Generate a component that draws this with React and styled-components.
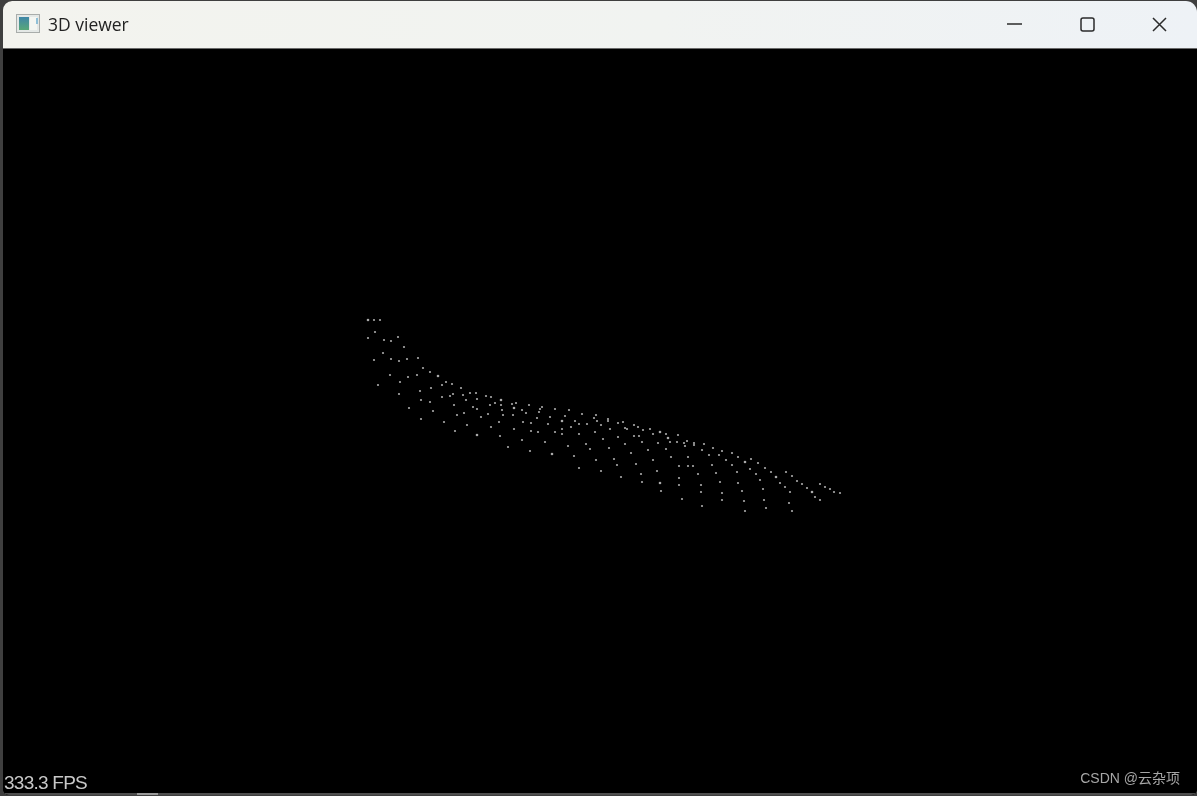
import React from "react";
import styled, { createGlobalStyle } from "styled-components";

const GlobalStyle = createGlobalStyle`
  html, body {
    margin: 0;
    padding: 0;
    height: 100%;
    background: #3f3f3f;
  }
  #root {
    height: 100%;
  }
`;

// point cloud, read off the reference in page coordinates
const cloud = [
  [368, 320], [374, 320], [380, 320], [375, 332], [368, 338], [384, 340], [391, 341], [398, 337],
  [404, 347], [383, 353], [374, 360], [391, 359], [399, 361], [407, 359], [418, 358], [423, 368],
  [430, 372], [438, 376], [417, 375], [408, 377], [390, 375], [400, 382], [378, 385], [399, 394],
  [420, 391], [431, 388], [442, 385], [446, 382], [452, 384], [461, 388], [470, 393], [476, 393],
  [486, 396], [491, 397], [501, 400], [512, 404], [516, 403], [463, 395], [453, 394], [450, 396],
  [442, 397], [421, 400], [430, 402], [466, 400], [477, 399], [495, 403], [501, 405], [490, 405],
  [454, 405], [473, 407], [477, 409], [514, 408], [502, 410], [409, 408], [433, 411], [457, 415],
  [464, 413], [488, 414], [503, 415], [513, 415], [481, 417], [421, 419], [444, 422], [467, 425],
  [499, 422], [491, 427], [514, 429], [455, 431], [477, 435], [500, 436], [508, 447],
  [529, 405], [542, 407], [540, 409], [539, 412], [522, 410], [526, 413], [555, 409], [569, 410],
  [582, 414], [596, 415], [594, 418], [565, 416], [550, 417], [537, 418], [562, 421], [575, 421],
  [597, 421], [608, 419], [608, 421], [523, 422], [531, 423], [548, 424], [579, 424], [587, 424],
  [601, 425], [618, 423], [623, 422], [634, 425], [638, 427], [650, 429], [643, 430], [660, 432],
  [666, 434], [678, 435], [653, 434], [625, 428], [627, 429], [610, 429], [571, 427], [562, 429],
  [531, 431], [538, 432], [555, 432], [562, 434], [579, 434], [595, 432], [634, 436], [639, 436],
  [668, 438], [618, 437], [603, 439], [642, 442], [658, 443], [670, 442], [677, 442], [522, 440],
  [545, 442], [586, 444], [625, 444], [568, 446], [590, 449], [609, 448], [648, 450], [666, 449],
  [530, 451], [552, 454], [631, 453], [574, 456], [671, 457], [596, 460], [614, 459], [653, 460],
  [679, 466], [636, 464], [617, 465], [579, 468], [601, 471], [657, 471], [641, 474], [621, 477],
  [679, 478], [642, 482], [660, 483], [679, 485], [661, 491],
  [684, 443], [687, 441], [694, 443], [694, 445], [704, 444], [685, 446], [713, 448], [722, 451],
  [702, 450], [709, 455], [719, 455], [732, 453], [738, 457], [751, 459], [745, 462], [758, 463],
  [726, 460], [732, 465], [688, 457], [712, 465], [688, 466], [693, 466], [765, 468], [750, 469],
  [737, 472], [771, 472], [786, 472], [716, 473], [698, 474], [756, 474], [792, 476], [776, 477],
  [760, 480], [797, 481], [720, 482], [738, 483], [780, 483], [802, 484], [820, 484],
  [825, 487], [830, 489], [834, 492], [840, 493], [785, 487], [807, 488], [701, 485], [763, 489],
  [742, 491], [812, 492], [790, 492], [701, 492], [722, 493], [815, 497], [820, 500], [682, 499],
  [722, 500], [744, 501], [764, 500], [789, 503], [702, 506], [766, 508], [745, 511], [792, 511],
];

const Window = styled.div`
  box-sizing: border-box;
  height: 796px;
  padding: 1px 0 1px 3px;
  display: flex;
  flex-direction: column;
`;

const Frame = styled.div`
  flex: 1;
  display: flex;
  flex-direction: column;
  border-radius: 9px 11px 6px 6px;
  overflow: hidden;
  background: #000;
`;

const TitleBar = styled.header`
  height: 48px;
  flex: none;
  display: flex;
  align-items: center;
  background: linear-gradient(90deg, #f3f3ee 0%, #f1f3f1 55%, #eef2f6 100%);
  border-bottom: 1px solid #6a6a6a;
  box-sizing: border-box;
`;

const AppIcon = styled.svg`
  width: 24px;
  height: 19px;
  margin: 0 0 2px 13px;
  flex: none;
  filter: blur(0.5px);
`;

const Title = styled.h1`
  margin: 0 0 2px 8px;
  flex: 1;
  font: 400 17.5px "Open Sans", "Noto Sans", sans-serif;
  color: #222;
  filter: blur(0.35px);
`;

const Controls = styled.div`
  display: flex;
  height: 100%;
  margin-right: 1px;
`;

const ControlButton = styled.button`
  width: 72.5px;
  padding: 0;
  border: 0;
  background: none;
  display: flex;
  align-items: center;
  justify-content: center;
  svg {
    width: 15px;
    height: 15px;
    fill: none;
    stroke: #2b2b2b;
    stroke-width: 1.5;
    filter: blur(0.3px);
  }
`;

const Viewport = styled.main`
  flex: 1;
  position: relative;
  background: #000;
  overflow: hidden;
`;

const Cloud = styled.svg`
  display: block;
  width: 100%;
  height: 100%;
  filter: blur(0.45px);
  circle {
    fill: #aaaaaa;
  }
`;

const Fps = styled.span`
  position: absolute;
  left: 1px;
  bottom: 1px;
  font: 400 19px/22px "Liberation Sans", Arial, sans-serif;
  letter-spacing: -0.75px;
  color: #c8c8c8;
  filter: blur(0.5px);
`;

const Watermark = styled.span`
  position: absolute;
  right: 17px;
  bottom: 8px;
  font: 400 14px/18px "Liberation Sans", "Noto Sans CJK SC", sans-serif;
  color: #a6a6a6;
  filter: blur(0.35px);
`;

const BottomEdge = styled.div`
  position: absolute;
  left: 0;
  right: 0;
  bottom: 0;
  height: 2px;
  background: linear-gradient(
    90deg,
    #4e4e4e 0,
    #4e4e4e 134px,
    #9a9a9a 134px,
    #9a9a9a 155px,
    #4e4e4e 155px
  );
`;

function App() {
  return (
    <>
      <GlobalStyle />
      <Window>
        <Frame>
          <TitleBar>
            <AppIcon viewBox="0 0 24 19">
              <defs>
                <linearGradient id="pane" x1="0" y1="0" x2="0" y2="1">
                  <stop offset="0%" stopColor="#3f86a8" />
                  <stop offset="100%" stopColor="#58a878" />
                </linearGradient>
              </defs>
              <rect x="0.5" y="0.5" width="23" height="18" fill="#e4e8e6" stroke="#a9adab" />
              <rect x="3" y="3" width="10" height="13" fill="url(#pane)" />
              <rect x="14" y="3" width="7" height="13" fill="#f4f6f2" />
              <rect x="20" y="4" width="2" height="6" fill="#8fc0d8" />
            </AppIcon>
            <Title>3D viewer</Title>
            <Controls>
              <ControlButton aria-label="Minimize">
                <svg viewBox="0 0 15 15">
                  <path d="M0 7h15" />
                </svg>
              </ControlButton>
              <ControlButton aria-label="Maximize">
                <svg viewBox="0 0 15 15">
                  <rect x="1" y="1" width="13" height="13" rx="2" />
                </svg>
              </ControlButton>
              <ControlButton aria-label="Close">
                <svg viewBox="0 0 15 15">
                  <path d="M1 1l13 13M14 1L1 14" />
                </svg>
              </ControlButton>
            </Controls>
          </TitleBar>
          <Viewport>
            <Cloud viewBox="3 49 1194 746">
              {cloud.map(([x, y], i) => (
                <circle key={i} cx={x} cy={y} r={i % 17 === 0 ? 1.3 : 1.1} />
              ))}
            </Cloud>
            <Fps>333.3 FPS</Fps>
            <Watermark>CSDN @云杂项</Watermark>
            <BottomEdge />
          </Viewport>
        </Frame>
      </Window>
    </>
  );
}

export default App;
